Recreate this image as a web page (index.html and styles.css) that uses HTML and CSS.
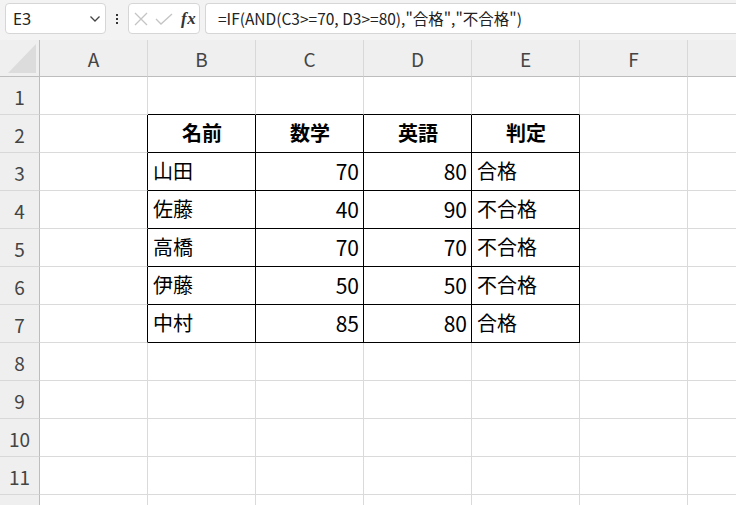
FILE: index.html
```html
<!DOCTYPE html>
<html lang="ja">
<head>
<meta charset="utf-8">
<link rel="stylesheet" href="styles.css">
</head>
<body>
<div class="app">
  <div class="fbar">
    <div class="namebox">
      <span class="ref">E3</span>
      <svg class="chev" width="12" height="8" viewBox="0 0 12 8"><polyline points="1.5,1.5 6,6 10.5,1.5" fill="none" stroke="#444" stroke-width="1.3"/></svg>
    </div>
    <div class="dots"><i></i><i></i><i></i></div>
    <div class="fxbox">
      <svg width="14" height="14" viewBox="0 0 14 14"><path d="M1 1 L13 13 M13 1 L1 13" stroke="#c4c4c4" stroke-width="1.3" fill="none"/></svg>
      <svg width="18" height="12" viewBox="0 0 18 12"><polyline points="1,6 6,11 17,1" stroke="#c4c4c4" stroke-width="1.3" fill="none"/></svg>
      <span class="fx">fx</span>
    </div>
    <div class="formula">=IF(AND(C3&gt;=70, D3&gt;=80),"合格","不合格")</div>
  </div>
  <div class="sheet">
    <div class="corner"><svg width="40" height="37" viewBox="0 0 40 37"><polygon points="36,4 36,33 8,33" fill="#dcdcdc"/></svg></div>
    <div class="ch">A</div><div class="ch">B</div><div class="ch">C</div><div class="ch">D</div><div class="ch">E</div><div class="ch">F</div><div class="ch"></div>

    <div class="rh">1</div><div class="c"></div><div class="c bb"></div><div class="c bb"></div><div class="c bb"></div><div class="c bb"></div><div class="c"></div><div class="c"></div>

    <div class="rh">2</div><div class="c br"></div><div class="c t hd">名前</div><div class="c t hd">数学</div><div class="c t hd">英語</div><div class="c t hd">判定</div><div class="c"></div><div class="c"></div>

    <div class="rh">3</div><div class="c br"></div><div class="c t">山田</div><div class="c t num">70</div><div class="c t num">80</div><div class="c t">合格</div><div class="c"></div><div class="c"></div>

    <div class="rh">4</div><div class="c br"></div><div class="c t">佐藤</div><div class="c t num">40</div><div class="c t num">90</div><div class="c t">不合格</div><div class="c"></div><div class="c"></div>

    <div class="rh">5</div><div class="c br"></div><div class="c t">高橋</div><div class="c t num">70</div><div class="c t num">70</div><div class="c t">不合格</div><div class="c"></div><div class="c"></div>

    <div class="rh">6</div><div class="c br"></div><div class="c t">伊藤</div><div class="c t num">50</div><div class="c t num">50</div><div class="c t">不合格</div><div class="c"></div><div class="c"></div>

    <div class="rh">7</div><div class="c br"></div><div class="c t">中村</div><div class="c t num">85</div><div class="c t num">80</div><div class="c t">合格</div><div class="c"></div><div class="c"></div>

    <div class="rh">8</div><div class="c"></div><div class="c"></div><div class="c"></div><div class="c"></div><div class="c"></div><div class="c"></div><div class="c"></div>
    <div class="rh">9</div><div class="c"></div><div class="c"></div><div class="c"></div><div class="c"></div><div class="c"></div><div class="c"></div><div class="c"></div>
    <div class="rh">10</div><div class="c"></div><div class="c"></div><div class="c"></div><div class="c"></div><div class="c"></div><div class="c"></div><div class="c"></div>
    <div class="rh">11</div><div class="c"></div><div class="c"></div><div class="c"></div><div class="c"></div><div class="c"></div><div class="c"></div><div class="c"></div>
    <div class="rh"></div><div class="c"></div><div class="c"></div><div class="c"></div><div class="c"></div><div class="c"></div><div class="c"></div><div class="c"></div>
  </div>
</div>
</body>
</html>
```
FILE: styles.css
```css
* { box-sizing: border-box; }
html, body { margin: 0; padding: 0; }
body {
  width: 736px;
  height: 505px;
  overflow: hidden;
  background: #fff;
  font-family: "Noto Sans CJK JP", "Noto Sans", sans-serif;
}
.app { width: 736px; height: 505px; overflow: hidden; }

.fbar {
  height: 40px;
  background: #f3f3f3;
  display: flex;
  align-items: flex-start;
  padding: 3px 0 0 5px;
  white-space: nowrap;
}
.namebox {
  width: 101px;
  height: 31px;
  background: #fff;
  border: 1px solid #d6d6d6;
  border-radius: 4px;
  display: flex;
  align-items: center;
  justify-content: space-between;
  padding: 0 4px 0 7px;
}
.ref { font-size: 16px; color: #222; font-family: "Noto Sans", sans-serif; }
.chev { margin-top: 1px; }
.dots {
  width: 22px;
  height: 31px;
  display: flex;
  flex-direction: column;
  align-items: center;
  justify-content: center;
  gap: 2px;
}
.dots i { display: block; width: 2px; height: 2px; background: #333; }
.fxbox {
  width: 72px;
  height: 31px;
  background: #fff;
  border: 1px solid #d6d6d6;
  border-radius: 4px;
  display: flex;
  align-items: center;
  padding: 0 0 0 5px;
  gap: 7px;
}
.fx {
  font-family: "Liberation Serif", serif;
  font-style: italic;
  font-weight: bold;
  font-size: 17px;
  color: #333;
  margin-left: 1px;
  letter-spacing: 0.5px;
}
.formula {
  margin-left: 5px;
  flex: 1;
  height: 31px;
  background: #fff;
  border: 1px solid #d6d6d6;
  border-right: none;
  border-radius: 4px 0 0 4px;
  padding: 0 0 0 12px;
  font-size: 15.5px;
  line-height: 29px;
  color: #222;
}

.sheet {
  display: grid;
  grid-template-columns: 40px repeat(7, 108px);
  grid-template-rows: 37px repeat(12, 38px);
}
.corner {
  background: #efefef;
  border-right: 1px solid #bdbdbd;
  border-bottom: 1px solid #bdbdbd;
}
.corner svg { display: block; }
.ch {
  background: #efefef;
  border-right: 1px solid #d8d8d8;
  border-bottom: 1px solid #bdbdbd;
  display: flex;
  align-items: center;
  justify-content: center;
  font-size: 19px;
  color: #444;
  padding-top: 1px;
}
.rh {
  background: #efefef;
  border-right: 1px solid #bdbdbd;
  border-bottom: 1px solid #d8d8d8;
  display: flex;
  align-items: center;
  justify-content: center;
  font-size: 19px;
  color: #444;
  padding-top: 1px;
}
.c {
  border-right: 1px solid #dadada;
  border-bottom: 1px solid #dadada;
  display: flex;
  align-items: center;
  padding: 0 4px 2px 5px;
  font-size: 20px;
  color: #000;
  overflow: hidden;
  white-space: nowrap;
}
.c.bb { border-bottom-color: #000; }
.c.br { border-right-color: #000; }
.c.t { border-right-color: #000; border-bottom-color: #000; }
.c.hd { justify-content: center; font-weight: bold; }
.c.num { justify-content: flex-end; font-size: 21px; }
```
